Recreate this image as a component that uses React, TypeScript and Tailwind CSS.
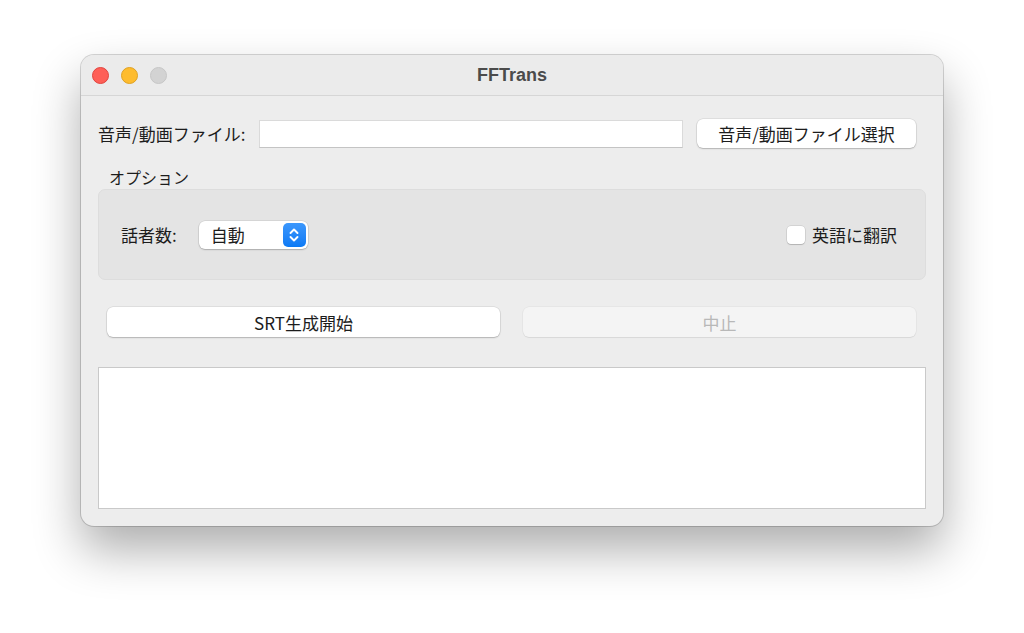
import React from "react";

const jp = { fontFamily: '"Noto Sans CJK JP", "Noto Sans", sans-serif' };

export default function App() {
  return (
    <div className="w-[1024px] h-[633px] bg-white overflow-hidden" style={jp}>
      <div className="pt-[55px] pl-[81px]">
        <div className="w-[862px] h-[471px] rounded-[13px] bg-[#ededed] shadow-[0_0_0_1px_rgba(0,0,0,0.16),0_24px_48px_rgba(0,0,0,0.32)] flex flex-col overflow-hidden">
          {/* title bar */}
          <div className="h-[41px] shrink-0 flex items-center border-b border-[#d6d6d6] bg-[#ebebeb] relative">
            <div className="flex items-center gap-[12px] pl-[11px]">
              <div className="w-[17px] h-[17px] rounded-full bg-[#fe5f57] border border-[#e0443e]" />
              <div className="w-[17px] h-[17px] rounded-full bg-[#febc2e] border border-[#dea123]" />
              <div className="w-[17px] h-[17px] rounded-full bg-[#d3d3d3] border border-[#c6c6c6]" />
            </div>
            <div
              className="absolute left-0 right-0 text-center text-[18px] font-bold text-[#4b4b4b] pointer-events-none"
              style={{ fontFamily: '"Liberation Sans", Arial, sans-serif' }}
            >
              FFTrans
            </div>
          </div>

          {/* body */}
          <div className="flex flex-col px-[17px] pt-[23px] text-[17px] text-[#1c1c1c]">
            {/* row 1 */}
            <div className="flex items-center h-[29px] pr-[10px]">
              <span className="leading-none whitespace-nowrap">音声/動画ファイル:</span>
              <div className="ml-[14px] flex-1 h-[28px] bg-white border border-[#dadada] border-b-[#c4c4c4]" />
              <button className="ml-[14px] w-[219px] h-[29px] bg-white rounded-[6px] shadow-[0_0_0_0.5px_rgba(0,0,0,0.12),0_1px_1.5px_rgba(0,0,0,0.2)] text-[17px] leading-none text-[#1c1c1c]">
                音声/動画ファイル選択
              </button>
            </div>

            {/* options label */}
            <div className="mt-[19px] pl-[11px] h-[20px] flex items-center text-[16px] leading-none">
              オプション
            </div>

            {/* group box */}
            <div className="mt-[2px] h-[91px] rounded-[7px] bg-[#e4e4e4] border border-[#dddddd] flex items-center pl-[22px] pr-[28px]">
              <span className="leading-none whitespace-nowrap">話者数:</span>
              <div className="ml-[22px] w-[109px] h-[28px] bg-white rounded-[6px] shadow-[0_0_0_0.5px_rgba(0,0,0,0.12),0_1px_1.5px_rgba(0,0,0,0.2)] flex items-center pl-[12px] pr-[2px]">
                <span className="flex-1 leading-none">自動</span>
                <div className="w-[23px] h-[24px] rounded-[5px] bg-gradient-to-b from-[#3b97fc] to-[#0a7af5] flex items-center justify-center">
                  <svg width="12" height="16" viewBox="0 0 12 16" fill="none" stroke="white" strokeWidth="1.9" strokeLinecap="round" strokeLinejoin="round">
                    <path d="M2.5 6 L6 2.5 L9.5 6" />
                    <path d="M2.5 10 L6 13.5 L9.5 10" />
                  </svg>
                </div>
              </div>
              <div className="flex-1" />
              <div className="w-[18px] h-[18px] bg-white rounded-[4px] shadow-[0_0_0_0.5px_rgba(0,0,0,0.15),0_1px_1px_rgba(0,0,0,0.15)]" />
              <span className="ml-[7px] leading-none whitespace-nowrap">英語に翻訳</span>
            </div>

            {/* buttons */}
            <div className="mt-[27px] flex gap-[23px] pl-[9px] pr-[10px]">
              <button className="flex-1 h-[30px] bg-white rounded-[6px] shadow-[0_0_0_0.5px_rgba(0,0,0,0.12),0_1px_1.5px_rgba(0,0,0,0.2)] text-[17px] leading-none text-[#1c1c1c]">
                SRT生成開始
              </button>
              <button className="flex-1 h-[30px] bg-[#f4f4f4] rounded-[6px] shadow-[0_0_0_0.5px_rgba(0,0,0,0.06),0_1px_1px_rgba(0,0,0,0.06)] text-[17px] leading-none text-[#b8b8b8]">
                中止
              </button>
            </div>

            {/* text area */}
            <div className="mt-[30px] h-[142px] bg-white border border-[#c9c9c9]" />
          </div>
        </div>
      </div>
    </div>
  );
}
